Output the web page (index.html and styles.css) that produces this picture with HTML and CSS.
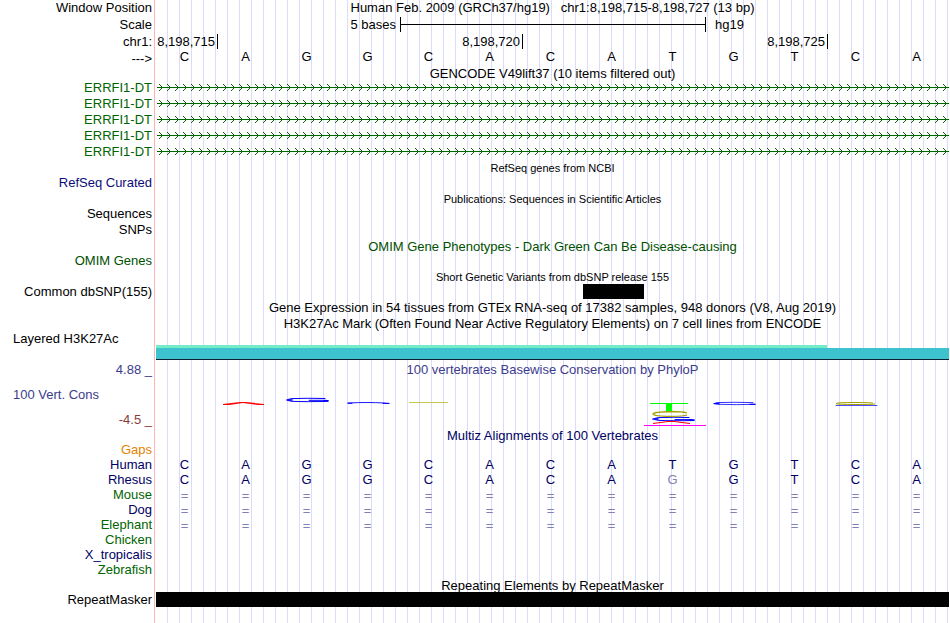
FILE: index.html
```html
<!DOCTYPE html>
<html lang="en">

<head>
    <meta charset="UTF-8">
    <meta name="viewport" content="width=device-width, initial-scale=1.0">
    <title>chr1:8,198,715-8,198,727</title>
    <link rel="stylesheet" href="styles.css">
</head>

<body>
    <svg class="defs" aria-hidden="true">
        <defs>
            <!-- one arrow of the intron line, repeated along the gene -->
            <pattern id="intron" width="8" height="16" patternUnits="userSpaceOnUse">
                <path d="M2 4 L5.5 7.5 L2 11" fill="none" stroke="#006400" stroke-width="1"/>
                <rect x="0" y="7" width="8" height="1" fill="#006400"/>
            </pattern>
        </defs>
    </svg>

    <main class="browser">
        <div class="row">
            <div class="label">Window Position</div>
            <div class="position">Human Feb. 2009 (GRCh37/hg19) &nbsp; chr1:8,198,715-8,198,727 (13 bp)</div>
        </div>
        <div class="row scale-row">
            <div class="label">Scale</div>
            <div class="scale">
                <span class="scale-size">5 bases</span>
                <span class="scale-bar"></span>
                <span class="scale-db">hg19</span>
            </div>
        </div>
        <div class="row">
            <div class="label">chr1:</div>
            <div class="ruler">
                <span class="tick">8,198,715</span>
                <span class="tick">8,198,720</span>
                <span class="tick">8,198,725</span>
            </div>
        </div>
        <table class="bases sequence">
            <tr><th scope="row">---&gt;</th><td>C</td><td>A</td><td>G</td><td>G</td><td>C</td><td>A</td><td>C</td><td>A</td><td>T</td><td>G</td><td>T</td><td>C</td><td>A</td></tr>
        </table>

        <!-- GENCODE -->
        <div class="row short">
            <div class="title">GENCODE V49lift37 (10 items filtered out)</div>
        </div>
        <div class="row gene">
            <div class="label">ERRFI1-DT</div>
            <svg class="intron"><rect width="100%" height="16" fill="url(#intron)"/></svg>
        </div>
        <div class="row gene">
            <div class="label">ERRFI1-DT</div>
            <svg class="intron"><rect width="100%" height="16" fill="url(#intron)"/></svg>
        </div>
        <div class="row gene">
            <div class="label">ERRFI1-DT</div>
            <svg class="intron"><rect width="100%" height="16" fill="url(#intron)"/></svg>
        </div>
        <div class="row gene">
            <div class="label">ERRFI1-DT</div>
            <svg class="intron"><rect width="100%" height="16" fill="url(#intron)"/></svg>
        </div>
        <div class="row gene">
            <div class="label">ERRFI1-DT</div>
            <svg class="intron"><rect width="100%" height="16" fill="url(#intron)"/></svg>
        </div>

        <!-- RefSeq -->
        <div class="row compact">
            <div class="title small">RefSeq genes from NCBI</div>
        </div>
        <div class="row">
            <div class="label refseq">RefSeq Curated</div>
        </div>

        <!-- Publications -->
        <div class="row compact">
            <div class="title small">Publications: Sequences in Scientific Articles</div>
        </div>
        <div class="row">
            <div class="label">Sequences</div>
        </div>
        <div class="row">
            <div class="label">SNPs</div>
        </div>

        <!-- OMIM -->
        <div class="row compact">
            <div class="title omim">OMIM Gene Phenotypes - Dark Green Can Be Disease-causing</div>
        </div>
        <div class="row">
            <div class="label omim">OMIM Genes</div>
        </div>

        <!-- dbSNP -->
        <div class="row compact">
            <div class="title small">Short Genetic Variants from dbSNP release 155</div>
        </div>
        <div class="row compact">
            <div class="label">Common dbSNP(155)</div>
            <div class="items"><div class="snp"></div></div>
        </div>

        <div class="row">
            <div class="title">Gene Expression in 54 tissues from GTEx RNA-seq of 17382 samples, 948 donors (V8, Aug 2019)</div>
        </div>

        <!-- H3K27Ac -->
        <div class="row">
            <div class="title">H3K27Ac Mark (Often Found Near Active Regulatory Elements) on 7 cell lines from ENCODE</div>
        </div>
        <div class="row">
            <div class="label side">Layered H3K27Ac</div>
            <div class="signal">
                <div class="signal-top"></div>
                <div class="signal-base"></div>
            </div>
        </div>

        <!-- Conservation -->
        <div class="row cons">
            <div class="cons-labels">
                <div class="label">4.88 _</div>
                <div class="label side">100 Vert. Cons</div>
                <div class="label min">-4.5 _</div>
            </div>
            <div>
                <div class="title">100 vertebrates Basewise Conservation by PhyloP</div>
                <svg class="logo" viewBox="0 0 793 49" preserveAspectRatio="none">
                    <path d="M67 26 L84 24 H90 L108 26 L108 27 L102 27 L87 25 L73 27 H67Z" fill="#f00"/>
                    <g fill="none" stroke="#00f" stroke-linecap="round">
                        <path d="M169 20.5 Q151 20 136 20.6 Q127 22 136 23.3 Q151 24 172 23.3 M153 22.3 H170"/>
                        <path d="M131 22 H136 M168 22.8 H172" stroke-width="1.6"/>
                        <path d="M192 25 Q212 24 228 25 L233 25.5" stroke-width="0.9"/>
                        <path d="M192 25.3 H196 M227 25.4 H233"/>
                        <path d="M597 24.6 Q577 24 561 24.6 Q556 25.5 563 26.3 Q580 27 599 26.3" stroke-width="0.8"/>
                        <path d="M558 25.6 H563 M594 26.3 H599" stroke-width="1.2"/>
                        <path d="M533 39.5 Q517 39 502 39.6 Q494 41.2 503 42.4 Q515 43 538 42.5 M519 41.6 H536"/>
                        <path d="M497 41 H502 M534 42 H538" stroke-width="1.6"/>
                        <path d="M680 27.5 H721" stroke-width="0.7"/>
                    </g>
                    <path d="M253 24.5 H292" stroke="#c8c850"/>
                    <g fill="none" stroke="#a0a000">
                        <path d="M531 35 Q527 33.5 515 33.5 Q498 34 497 36 Q498 38.3 515 38.3 Q528 38.3 531 37" stroke-width="1.3"/>
                        <path d="M717 25.2 Q715 24.5 700 24.5 Q680 24.5 680 25.6 Q681 26.5 700 26.5 Q716 26.5 719 26"/>
                    </g>
                    <path d="M494 25 H532 V26 H516 V33 H510 V26 H494Z" fill="#0f0"/>
                    <path d="M497 45.5 L512 43.5 H518 L534 45.5" fill="none" stroke="#f00" stroke-width="1.1"/>
                    <rect x="488" y="47" width="62" height="1" fill="#f0f"/>
                </svg>
            </div>
        </div>

        <!-- Multiz alignment -->
        <div class="row compact">
            <div class="title multiz">Multiz Alignments of 100 Vertebrates</div>
        </div>
        <table class="bases alignment">
            <tr class="gaps"><th scope="row">Gaps</th><td colspan="13"></td></tr>
            <tr><th scope="row">Human</th><td>C</td><td>A</td><td>G</td><td>G</td><td>C</td><td>A</td><td>C</td><td>A</td><td>T</td><td>G</td><td>T</td><td>C</td><td>A</td></tr>
            <tr><th scope="row">Rhesus</th><td>C</td><td>A</td><td>G</td><td>G</td><td>C</td><td>A</td><td>C</td><td>A</td><td class="diff">G</td><td>G</td><td>T</td><td>C</td><td>A</td></tr>
            <tr class="green unaligned"><th scope="row">Mouse</th><td>=</td><td>=</td><td>=</td><td>=</td><td>=</td><td>=</td><td>=</td><td>=</td><td>=</td><td>=</td><td>=</td><td>=</td><td>=</td></tr>
            <tr class="unaligned"><th scope="row">Dog</th><td>=</td><td>=</td><td>=</td><td>=</td><td>=</td><td>=</td><td>=</td><td>=</td><td>=</td><td>=</td><td>=</td><td>=</td><td>=</td></tr>
            <tr class="green unaligned"><th scope="row">Elephant</th><td>=</td><td>=</td><td>=</td><td>=</td><td>=</td><td>=</td><td>=</td><td>=</td><td>=</td><td>=</td><td>=</td><td>=</td><td>=</td></tr>
            <tr class="green"><th scope="row">Chicken</th><td colspan="13"></td></tr>
            <tr><th scope="row">X_tropicalis</th><td colspan="13"></td></tr>
            <tr class="green"><th scope="row">Zebrafish</th><td colspan="13"></td></tr>
        </table>

        <!-- RepeatMasker -->
        <div class="row compact">
            <div class="title">Repeating Elements by RepeatMasker</div>
        </div>
        <div class="row compact">
            <div class="label">RepeatMasker</div>
            <div class="repeat"></div>
        </div>
    </main>
</body>

</html>
```
FILE: styles.css
```css
* {
    box-sizing: border-box;
}

body {
    margin: 0;
    background: #fff;
    color: #000;
    font-family: "Liberation Sans", Arial, Helvetica, sans-serif;
    font-size: 13px;
    line-height: 15px;
}

.defs {
    display: block;
    width: 0;
    height: 0;
}

/* white label column, red edge, then a guide line every 12px */
.browser {
    min-height: 100vh;
    padding-right: 1px;
    background:
        linear-gradient(to right, #fff 154px, #ffb4b4 154px, #ffb4b4 155px, #fff 155px, #fff 156px, transparent 156px),
        repeating-linear-gradient(to right, transparent 0, transparent 11px, #dcdcfa 11px, #dcdcfa 12px);
}

.row {
    display: grid;
    grid-template-columns: 152px 1fr;
    column-gap: 4px;
    min-height: 16px;
}

.compact {
    min-height: 15px;
}

.short {
    min-height: 14px;
}

.scale-row {
    min-height: 18px;
    line-height: 18px;
}

.label {
    text-align: right;
    white-space: nowrap;
}

.position,
.title {
    grid-column: 2;
    text-align: center;
    white-space: nowrap;
}

.title {
    padding-top: 2px;
    line-height: 13px;
}

.short .title {
    line-height: 12px;
}

.small {
    font-size: 11px;
}

.side {
    padding-left: 13px;
    text-align: left;
}

/* scale and ruler */
.scale {
    display: grid;
    grid-template-columns: 244fr 306fr 243fr;
}

.scale-size {
    padding-right: 4px;
    text-align: right;
}

.scale-bar {
    height: 15px;
    margin-top: 1px;
    border: solid #000;
    border-width: 0 1px;
    background: linear-gradient(#000, #000) 0 7px / 100% 1px no-repeat;
}

.scale-db {
    padding-left: 9px;
}

.ruler {
    display: grid;
    grid-template-columns: 62fr 305fr 305fr 121fr;
}

.tick {
    height: 15px;
    padding-right: 2px;
    border-right: 1px solid #000;
    text-align: right;
    white-space: nowrap;
}

/* rows of bases, one cell each */
.bases {
    width: calc(100% - 2px);
    table-layout: fixed;
    border-collapse: collapse;
}

.bases th,
.bases td {
    height: 15px;
    padding: 0;
    font-weight: normal;
    text-align: center;
}

.bases th {
    width: 154px;
    padding-right: 2px;
    text-align: right;
}

.sequence th,
.sequence td {
    height: 16px;
    line-height: 14px;
    vertical-align: top;
}

.sequence th {
    vertical-align: bottom;
}

.alignment,
.multiz {
    color: #000064;
}

.alignment .green th {
    color: #006400;
}

.alignment .gaps th {
    color: #e68200;
}

.alignment .diff,
.alignment .unaligned td {
    color: #8080b4;
}

.alignment .unaligned td {
    padding-top: 2px;
    line-height: 13px;
}

/* tracks */
.gene {
    color: #006400;
}

.intron {
    width: 100%;
    height: 16px;
    padding-left: 1px;
}

.refseq {
    color: #0c0c78;
}

.omim {
    color: #005000;
}

.snp {
    width: 7.7%;
    height: 15px;
    margin-left: 53.8%;
    background: #000;
}

.signal {
    padding-top: 14px;
}

.signal-top {
    width: 84.6%;
    height: 3px;
    background: #74ecc8;
}

.signal-base {
    height: 12px;
    border-bottom: 1px solid #102030;
    background: #3cc3cd;
}

.cons {
    padding-top: 1px;
    color: #3c3c8c;
}

.cons-labels {
    display: flex;
    flex-direction: column;
    gap: 10px;
    padding-top: 1px;
}

.min {
    color: #8c3c3c;
}

.logo {
    display: block;
    width: 100%;
    height: 49px;
    margin-top: 2px;
}

.repeat {
    height: 15px;
    background: #000;
}
```
